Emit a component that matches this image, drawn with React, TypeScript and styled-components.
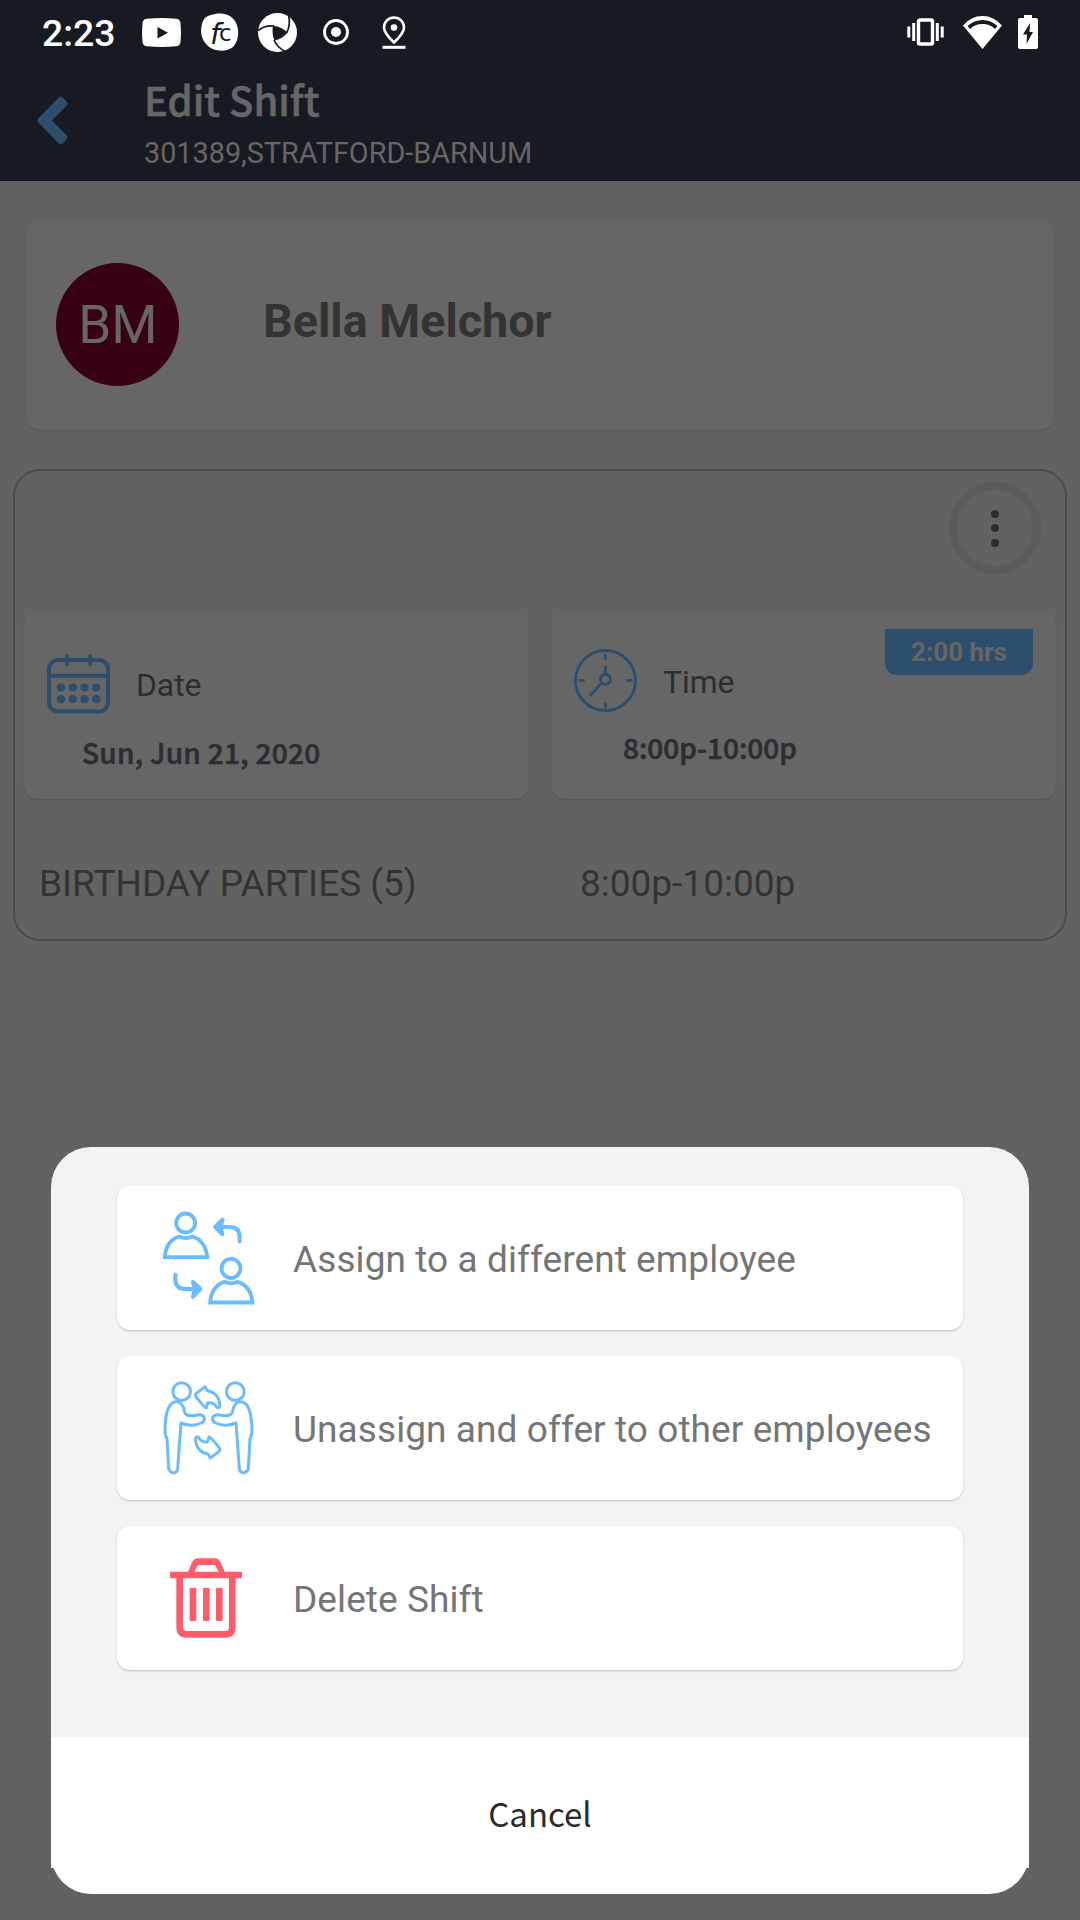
import React from "react";
import styled, { createGlobalStyle } from "styled-components";

const roboto = `Roboto, "Liberation Sans", sans-serif`;
const source = `"Noto Sans CJK SC", "Noto Sans", sans-serif`;

const GlobalStyle = createGlobalStyle`
  * { box-sizing: border-box; }
  body { margin: 0; background: #626262; }
  svg { display: block; flex: none; overflow: visible; }
`;

const Screen = styled.div`
  position: relative;
  width: 1080px;
  height: 1920px;
  overflow: hidden;
  background: #626262;
  font-family: ${roboto};
`;

const Header = styled.header`
  height: 181px;
  background: #171a21;
`;

const StatusBar = styled.div`
  display: flex;
  align-items: center;
  height: 64px;
  padding: 0 42px 0 42px;
`;

const Clock = styled.span`
  width: 72px;
  margin-right: 28px;
  padding-top: 2px;
  font-size: 37.3px;
  font-weight: 500;
  line-height: 40px;
  color: #fff;
  white-space: nowrap;
`;

const StatusIcon = styled.span<{ $gap: number }>`
  margin-right: ${(p) => p.$gap}px;
`;

const Spacer = styled.div`
  flex: 1;
`;

const TitleRow = styled.div`
  display: flex;
  padding-left: 37px;
`;

const BackButton = styled.div`
  width: 107px;
  padding-top: 32px;
`;

const Titles = styled.div`
  padding-top: 15px;
`;

const Title = styled.div`
  font-family: ${source};
  font-size: 40px;
  font-weight: 500;
  line-height: 40px;
  color: #666;
  -webkit-text-stroke: 0.6px #666;
`;

const Subtitle = styled.div`
  margin-top: 18px;
  font-size: 28.8px;
  line-height: 32px;
  color: #666;
`;

const Card = styled.section`
  background: #666;
  border-radius: 14px;
  box-shadow: 0 1px 2px rgba(0, 0, 0, 0.14);
`;

const EmployeeCard = styled(Card)`
  display: flex;
  align-items: center;
  height: 210px;
  margin: 39px 26px 0;
  padding: 0 0 1px 30px;
`;

const Avatar = styled.div`
  display: flex;
  align-items: center;
  justify-content: center;
  width: 123px;
  height: 123px;
  padding-left: 1px;
  border-radius: 50%;
  background: #380013;
  color: #666;
  font-size: 53px;
`;

const EmployeeName = styled.div`
  margin: -8px 0 0 84px;
  font-size: 46.7px;
  font-weight: 700;
  color: #333;
`;

const ShiftPanel = styled.section`
  height: 472px;
  margin: 39px 13px 0;
  padding: 11px 9px 0;
  border: 2px solid #4b4b4b;
  border-radius: 27px;
`;

const MoreButton = styled.div`
  display: flex;
  flex-direction: column;
  align-items: center;
  justify-content: center;
  gap: 6.5px;
  width: 92px;
  height: 92px;
  margin-left: auto;
  margin-right: 15px;
  border: 8px solid #5b5b5b;
  border-radius: 50%;
`;

const Dot = styled.i`
  width: 8px;
  height: 8px;
  border-radius: 50%;
  background: #2c2d33;
`;

const DetailGrid = styled.div`
  display: grid;
  grid-template-columns: 505px 505px;
  gap: 22px;
  margin-top: 37px;
`;

const DetailCard = styled(Card)`
  height: 188px;
  padding: 18px 23px 0;
`;

const DetailHead = styled.div<{ $top: number }>`
  display: flex;
  align-items: flex-start;
  height: 100px;
  padding-top: ${(p) => p.$top}px;
`;

const DetailLabel = styled.span<{ $top: number }>`
  flex: 1;
  margin: ${(p) => p.$top}px 0 0 26px;
  font-size: 31.8px;
  line-height: 36px;
  color: #2d2d2d;
`;

const DetailValue = styled.div<{ $left: number; $top: number; $spacing: number }>`
  margin: ${(p) => p.$top}px 0 0 ${(p) => p.$left}px;
  font-family: ${source};
  font-size: 28px;
  font-weight: 500;
  line-height: 36px;
  letter-spacing: ${(p) => p.$spacing}px;
  color: #2c2d33;
  -webkit-text-stroke: 0.6px #2c2d33;
`;

const HoursBadge = styled.span`
  width: 148px;
  height: 46px;
  margin-top: -20px;
  border-radius: 0 0 12px 12px;
  background: #2c4d6b;
  color: #666;
  font-size: 26px;
  font-weight: 700;
  line-height: 47px;
  text-align: center;
`;

const JobRow = styled.div`
  display: grid;
  grid-template-columns: 541px 1fr;
  margin-top: 65px;
  padding-left: 15px;
  font-size: 37px;
  line-height: 40px;
  color: #333;
`;

const Sheet = styled.div`
  position: absolute;
  left: 51px;
  top: 1147px;
  width: 978px;
  height: 747px;
  border-radius: 40px;
  background: linear-gradient(#f3f3f3 0 590px, #fff 590px);
`;

const Actions = styled.div`
  display: flex;
  flex-direction: column;
  gap: 26px;
  height: 590px;
  padding: 39px 66px 0;
`;

const Action = styled.button`
  display: flex;
  align-items: center;
  height: 144px;
  padding: 0;
  border: 0;
  border-radius: 13px;
  background: #fff;
  box-shadow: 0 1px 2px rgba(0, 0, 0, 0.22);
  text-align: left;
`;

const ActionIcon = styled.span<{ $left: number }>`
  width: 176px;
  padding-left: ${(p) => p.$left}px;
`;

const ActionLabel = styled.span`
  margin-top: 4px;
  font-family: ${roboto};
  font-size: 37px;
  line-height: 44px;
  letter-spacing: 0.08px;
  color: #757575;
  white-space: nowrap;
`;

const Cancel = styled.button`
  display: block;
  width: 978px;
  height: 131px;
  padding: 20px 0 0;
  border: 0;
  background: #fff;
  font-family: ${source};
  font-size: 33px;
  line-height: 40px;
  color: #2a2a2a;
`;

const YouTube = () => (
  <svg width="39" height="29" viewBox="0 0 39 29">
    <path fill="#fff" d="M5 .8Q19.500-.8 34 .8Q38 1 38.500 5Q39.500 14.500 38.500 24Q38 28 34 28.300Q19.500 29.800 5 28.300Q1 28 .5 24Q-.5 14.500.5 5Q1 1 5 .8Z" />
    <path fill="#171a21" d="M15.500 9V20.500L26 14.700Z" />
  </svg>
);

const Monogram = () => (
  <svg width="38" height="38" viewBox="0 0 38 38">
    <path fill="#fff" d="M10 2C18-1 29 0 34 8C39 16 38 28 32 34C26 39 13 39 7 33C0 27-1 18 1 11C2 6 5 3 10 2Z" />
    <text x="9" y="30.500" fontFamily="DejaVu Sans" fontStyle="italic" fontSize="29" fill="#171a21">f</text>
    <text x="18" y="27.500" fontFamily="DejaVu Sans" fontSize="23" fill="#171a21">c</text>
  </svg>
);

const Shutter = () => (
  <svg width="39" height="39" viewBox="0 0 39 39">
    <circle cx="19.500" cy="19.500" r="19.500" fill="#fff" />
    <g fill="none" stroke="#171a21" strokeWidth="1.700">
      <path d="M0 17.500Q7 12 16 13" />
      <path d="M30.500 2Q33 12 28.500 20" />
      <path d="M16 27Q19 34 27 38.500" />
    </g>
    <path fill="#171a21" d="M15 12.700Q24 13.500 29.500 19.700Q24 26 16.400 27.500Q13.500 20 15 12.700Z" />
  </svg>
);

const RecordDot = () => (
  <svg width="26" height="26" viewBox="0 0 26 26">
    <circle cx="13" cy="13" r="11.500" fill="none" stroke="#fff" strokeWidth="2.800" />
    <circle cx="13" cy="13" r="5" fill="#fff" />
  </svg>
);

const Pin = () => (
  <svg width="24" height="33" viewBox="0 0 24 33">
    <path fill="none" stroke="#fff" strokeWidth="2.600" d="M12 26.500Q2 17 2 11.500A10 10 0 0 1 22 11.500Q22 17 12 26.500Z" />
    <circle cx="12" cy="11.500" r="3.300" fill="#fff" />
    <path fill="#fff" d="M.5 29.800h23v3H.5z" />
  </svg>
);

const Vibrate = () => (
  <svg width="37" height="28" viewBox="0 0 37 28">
    <rect x="11.500" y="2" width="14" height="24" rx="1.500" fill="none" stroke="#fff" strokeWidth="3.400" />
    <path stroke="#fff" strokeWidth="3" d="M1.800 8.500v11M6.700 5v18M30.300 5v18M35.200 8.500v11" />
  </svg>
);

const Wifi = () => (
  <svg width="39" height="33" viewBox="0 0 39 33">
    <path fill="#fff" fillRule="evenodd" d="M19.500 33L0 9.500Q8 0 19.500 0T39 9.500ZM4.500 10L7 13Q12 8 19.500 8T32 13L34.500 10Q28 4 19.500 4T4.500 10Z" />
  </svg>
);

const Battery = () => (
  <svg width="20" height="34" viewBox="0 0 20 34">
    <path fill="#fff" d="M6 0h8v3h4q2 0 2 2v27q0 2-2 2H2q-2 0-2-2V5q0-2 2-2h4z" />
    <path fill="#171a21" d="M12 8L5 19.500h4L8.500 29L15 17h-3.500z" />
  </svg>
);

const BackIcon = () => (
  <svg width="31" height="49" viewBox="0 0 31 49">
    <path fill="#2c4d6b" d="M22 1.200Q24 0 25.500 1.200L30 6Q31.500 7.500 30 9.300L15 24.500L30 39.700Q31.500 41.500 30 43L25.500 47.800Q24 49 22 47.800L.8 26Q-.5 24.500.8 23Z" />
  </svg>
);

const CalendarIcon = () => (
  <svg width="63" height="60" viewBox="0 0 63 60" fill="none" stroke="#2c4d6b" strokeWidth="4">
    <rect x="2" y="6" width="59" height="51.500" rx="9" />
    <path d="M2 21.700h59" />
    <path strokeLinecap="round" strokeWidth="3.800" d="M19.900 2v8.500M43.200 2v8.500" />
    <g fill="#2c4d6b" stroke="none">
      {[14, 25.800, 37.500, 49.200].map((x) => (
        <React.Fragment key={x}>
          <circle cx={x} cy="33.500" r="4.100" />
          <circle cx={x} cy="45.200" r="4.100" />
        </React.Fragment>
      ))}
    </g>
  </svg>
);

const ClockIcon = () => (
  <svg width="63" height="63" viewBox="0 0 63 63" fill="none" stroke="#2c4d6b" strokeWidth="2.900" strokeLinecap="round">
    <circle cx="31.500" cy="31.500" r="30" />
    <circle cx="31.500" cy="30.300" r="5" />
    <path d="M31.500 18v7M27.800 34L16.500 46M31.500 6.500v3M31.500 55v3M6 31.500h3.500M54 31.500h3.500" />
  </svg>
);

const Person = () => (
  <>
    <circle cx="137" cy="99" r="28.500" />
    <path d="M74.500 201.500Q78 152 118 139.500Q137 149 157 139.500Q197 152 201.500 201.500Z" />
  </>
);

const SwapPeopleIcon = () => (
  <svg width="91" height="92" viewBox="69 66 273 276" fill="none" stroke="#6bbcff" strokeWidth="11.500">
    <Person />
    <g transform="translate(136 136)">
      <Person />
    </g>
    <g strokeWidth="12.500" strokeLinecap="round" strokeLinejoin="round">
      <path d="M299 154V142Q299 111 268 111H230" />
      <path fill="#6bbcff" d="M248 89L226 111L247 132L241 111Z" />
      <path d="M106 254V266Q106 297 137 297H178" />
      <path fill="#6bbcff" d="M159 276L181 297L159 320L165 297Z" />
    </g>
  </svg>
);

const Worker = () => (
  <>
    <circle cx="125" cy="95" r="26.500" />
    <path d="M104 126C86 130 80 155 77 180C75 200 71 222 81 236L86 326Q90 339 100 338Q111 338 113 326L123 189Q155 202 184 189Q195 184 193 173Q188 161 172 165Q150 170 138 163C129 155 135 150 130 141C124 127 112 124 104 126Z" />
  </>
);

const HandOverArrow = () => (
  <path d="M169 100L195 80L202 92C227 96 241 116 239 140Q234 147 229 140Q220 125 203 129L199 144Q195 144 169 112Q164 106 169 100Z" />
);

const HandOverIcon = () => (
  <svg width="91" height="92" viewBox="69 66 273 276" fill="none" stroke="#6bbcff" strokeWidth="9" strokeLinejoin="round">
    <Worker />
    <g transform="translate(411 0) scale(-1 1)">
      <Worker />
    </g>
    <HandOverArrow />
    <g transform="rotate(180 203 187)">
      <HandOverArrow />
    </g>
  </svg>
);

const TrashIcon = () => (
  <svg width="72" height="80" viewBox="90 84 216 240" fill="#ff5c6b">
    <path d="M144 127L155 99Q161 85 175 85H223Q237 85 243 99L255 127H236L227 108Q226 105 222 105H177Q173 105 172 108L163 127Z" />
    <rect x="90" y="125" width="216" height="20" rx="3" />
    <path fill="none" stroke="#ff5c6b" strokeWidth="20" d="M119 140V290Q119 313 140 313H256Q277 313 277 290V140" />
    <rect x="149" y="174" width="20" height="99" rx="4" />
    <rect x="189" y="174" width="20" height="99" rx="4" />
    <rect x="228" y="174" width="20" height="99" rx="4" />
  </svg>
);

export default function App() {
  return (
    <Screen>
      <GlobalStyle />
      <Header>
        <StatusBar>
          <Clock>2:23</Clock>
          <StatusIcon $gap={20}><YouTube /></StatusIcon>
          <StatusIcon $gap={19}><Monogram /></StatusIcon>
          <StatusIcon $gap={26}><Shutter /></StatusIcon>
          <StatusIcon $gap={33}><RecordDot /></StatusIcon>
          <StatusIcon $gap={0}><Pin /></StatusIcon>
          <Spacer />
          <StatusIcon $gap={19}><Vibrate /></StatusIcon>
          <StatusIcon $gap={16}><Wifi /></StatusIcon>
          <StatusIcon $gap={0}><Battery /></StatusIcon>
        </StatusBar>
        <TitleRow>
          <BackButton><BackIcon /></BackButton>
          <Titles>
            <Title>Edit Shift</Title>
            <Subtitle>301389,STRATFORD-BARNUM</Subtitle>
          </Titles>
        </TitleRow>
      </Header>

      <EmployeeCard>
        <Avatar>BM</Avatar>
        <EmployeeName>Bella Melchor</EmployeeName>
      </EmployeeCard>

      <ShiftPanel>
        <MoreButton><Dot /><Dot /><Dot /></MoreButton>
        <DetailGrid>
          <DetailCard>
            <DetailHead $top={25}>
              <CalendarIcon />
              <DetailLabel $top={13}>Date</DetailLabel>
            </DetailHead>
            <DetailValue $left={35} $top={5} $spacing={0.3}>Sun, Jun 21, 2020</DetailValue>
          </DetailCard>
          <DetailCard>
            <DetailHead $top={20}>
              <ClockIcon />
              <DetailLabel $top={15}>Time</DetailLabel>
              <HoursBadge>2:00 hrs</HoursBadge>
            </DetailHead>
            <DetailValue $left={49} $top={0} $spacing={0}>8:00p-10:00p</DetailValue>
          </DetailCard>
        </DetailGrid>
        <JobRow>
          <span>BIRTHDAY PARTIES (5)</span>
          <span>8:00p-10:00p</span>
        </JobRow>
      </ShiftPanel>

      <Sheet>
        <Actions>
          <Action>
            <ActionIcon $left={46}><SwapPeopleIcon /></ActionIcon>
            <ActionLabel>Assign to a different employee</ActionLabel>
          </Action>
          <Action>
            <ActionIcon $left={46}><HandOverIcon /></ActionIcon>
            <ActionLabel>Unassign and offer to other employees</ActionLabel>
          </Action>
          <Action>
            <ActionIcon $left={53}><TrashIcon /></ActionIcon>
            <ActionLabel>Delete Shift</ActionLabel>
          </Action>
        </Actions>
        <Cancel>Cancel</Cancel>
      </Sheet>
    </Screen>
  );
}
